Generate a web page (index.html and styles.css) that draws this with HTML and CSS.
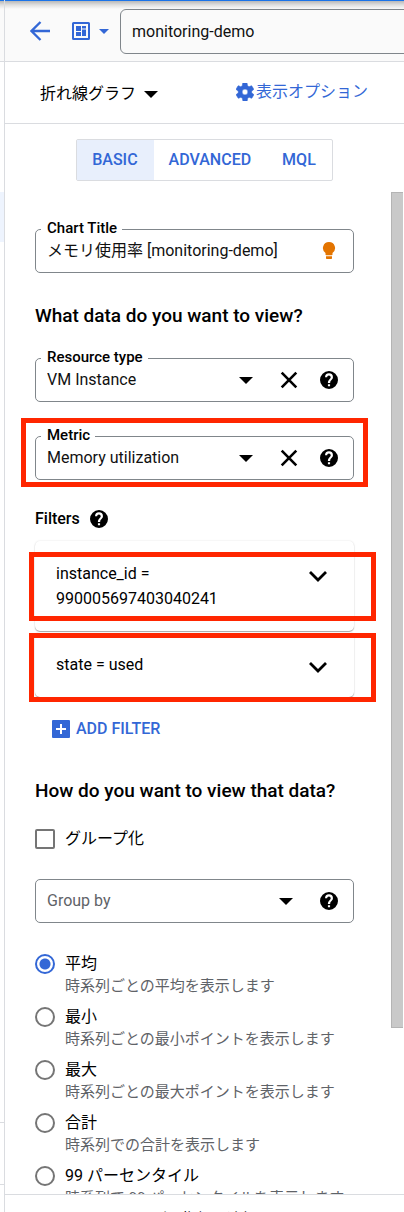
FILE: index.html
```html
<!DOCTYPE html>
<html lang="ja">
<head>
<meta charset="utf-8">
<meta name="viewport" content="width=device-width, initial-scale=1">
<title>monitoring-demo</title>
<link rel="stylesheet" href="styles.css">
</head>
<body>
<svg class="sprite" aria-hidden="true">
  <symbol id="caret" viewBox="0 0 12 6"><path d="M0 0h12L6 6z"/></symbol>
  <symbol id="close" viewBox="0 0 20 20"><path d="M2.700 2.700l14.600 14.600M17.300 2.700L2.700 17.300" fill="none" stroke="currentColor" stroke-width="2.600"/></symbol>
  <symbol id="help" viewBox="2 2 20 20"><path d="M12 2a10 10 0 1 0 0 20 10 10 0 0 0 0-20zm1.200 17h-2.400v-2.400h2.400zm2.300-7.700l-.9.9c-.8.8-1.300 1.500-1.300 3h-2.500v-.6c0-1.200.5-2.200 1.300-3l1.200-1.200c.4-.4.6-.9.6-1.400a2 2 0 0 0-4 0H7.600a4.400 4.400 0 0 1 8.800 0c0 .9-.4 1.700-.9 2.300z"/></symbol>
  <symbol id="chevron" viewBox="0 0 24 24"><path d="M4 8l8 8 8-8" fill="none" stroke="currentColor" stroke-width="2.800"/></symbol>
</svg>
<div class="backdrop" aria-hidden="true">
  <div class="backdrop-head"></div>
  <div class="backdrop-gap"></div>
  <div class="backdrop-selected"></div>
  <div class="backdrop-rest"></div>
  <div class="backdrop-row"></div>
  <div class="backdrop-tail"></div>
</div>
<main class="panel">
  <header class="topbar">
    <button class="icon-button" aria-label="戻る"><svg class="back" viewBox="0 0 20 20"><path d="M20 10H2M10.500 1L1.500 10l9 9" fill="none" stroke="currentColor" stroke-width="2.300"/></svg></button>
    <button class="icon-button board" aria-label="ダッシュボード"><svg class="board-icon" viewBox="0 0 18 18"><path fill-rule="evenodd" d="M1.500 0h15Q18 0 18 1.500v15q0 1.500-1.500 1.500h-15Q0 18 0 16.500v-15Q0 0 1.500 0zM2 2v14h14V2zM4 4h5v5H4zm6 0h4v2.500h-4zM4 10h5v4H4zM10 7.500h4V14h-4z"/></svg><svg class="caret-small"><use href="#caret"/></svg></button>
    <input class="name-input" aria-label="名前" value="monitoring-demo">
  </header>
  <div class="toolbar">
    <button class="chart-type">折れ線グラフ<svg class="caret"><use href="#caret"/></svg></button>
    <a class="options" href="#"><svg class="gear" viewBox="2 2 20 20"><path d="M19.400 13c.1-.7.1-1.300 0-2l2.100-1.600c.2-.2.300-.4.100-.7l-2-3.400c-.1-.2-.4-.3-.6-.2l-2.500 1c-.5-.4-1.100-.7-1.700-1l-.4-2.600c0-.3-.2-.5-.5-.5h-4c-.3 0-.5.2-.5.4L9 5.100c-.6.2-1.100.6-1.700 1l-2.500-1c-.2-.1-.5 0-.6.2l-2 3.400c-.1.200-.1.500.1.700L4.500 11c-.1.700-.1 1.300 0 2l-2.100 1.600c-.2.200-.3.500-.1.700l2 3.400c.1.200.4.300.6.200l2.500-1c.5.400 1.100.7 1.700 1l.4 2.600c0 .3.2.5.5.5h4c.3 0 .5-.2.5-.4l.4-2.700c.6-.2 1.100-.6 1.700-1l2.500 1c.2.100.5 0 .6-.2l2-3.400c.1-.2.100-.5-.1-.7zM12 15.200a3.200 3.200 0 1 1 0-6.400 3.200 3.200 0 0 1 0 6.400z" stroke="currentColor" stroke-width=".6"/></svg>表示オプション</a>
  </div>
  <nav class="tabs">
    <div class="tab-group">
      <button class="tab selected">BASIC</button>
      <button class="tab">ADVANCED</button>
      <button class="tab">MQL</button>
    </div>
  </nav>
  <div class="scroller">
    <form class="form">
      <div class="field">
        <label class="field-label" for="title">Chart Title</label>
        <input class="control" id="title" value="メモリ使用率 [monitoring-demo]">
        <svg class="bulb" viewBox="0 0 20 20"><path d="M10 1a6 6 0 0 0-3.500 10.900V13.500q0 .8.800.8h5.400q.8 0 .8-.8v-1.600A6 6 0 0 0 10 1zM7 15.300h6v1.600q0 1.200-1.200 1.200H8.200Q7 18.100 7 16.900z"/></svg>
      </div>

      <h2 class="heading">What data do you want to view?</h2>
      <div class="field">
        <label class="field-label" for="resource">Resource type</label>
        <select class="control" id="resource"><option>VM Instance</option></select>
        <svg class="caret-slot"><use href="#caret"/></svg>
        <button type="button" class="slot" aria-label="クリア"><svg class="icon"><use href="#close"/></svg></button>
        <button type="button" class="slot" aria-label="ヘルプ"><svg class="icon-help"><use href="#help"/></svg></button>
      </div>
      <div class="field metric">
        <label class="field-label" for="metric">Metric</label>
        <select class="control" id="metric"><option>Memory utilization</option></select>
        <svg class="caret-slot"><use href="#caret"/></svg>
        <button type="button" class="slot" aria-label="クリア"><svg class="icon"><use href="#close"/></svg></button>
        <button type="button" class="slot" aria-label="ヘルプ"><svg class="icon-help"><use href="#help"/></svg></button>
        <span class="mark mark-metric"></span>
      </div>

      <div class="filters-title">Filters <button type="button" class="slot" aria-label="ヘルプ"><svg class="icon-help"><use href="#help"/></svg></button></div>
      <div class="filters">
        <div class="card">
          <div class="card-text">instance_id =<br>990005697403040241</div>
          <button type="button" class="expand" aria-label="展開"><svg class="chevron"><use href="#chevron"/></svg></button>
          <span class="mark mark-instance"></span>
        </div>
        <div class="card">
          <div class="card-text">state = used</div>
          <button type="button" class="expand" aria-label="展開"><svg class="chevron"><use href="#chevron"/></svg></button>
          <span class="mark mark-state"></span>
        </div>
      </div>
      <button type="button" class="add"><svg class="plus" viewBox="0 0 18 18"><path fill-rule="evenodd" d="M1 0h16q1 0 1 1v16q0 1-1 1H1q-1 0-1-1V1Q0 0 1 0zM8 4v4H4v2h4v4h2v-4h4V8h-4V4z"/></svg>ADD FILTER</button>

      <h2 class="heading how">How do you want to view that data?</h2>
      <label class="check"><input type="checkbox" class="box">グループ化</label>
      <div class="field">
        <select class="control muted" aria-label="Group by"><option>Group by</option></select>
        <svg class="caret-slot"><use href="#caret"/></svg>
        <button type="button" class="slot" aria-label="ヘルプ"><svg class="icon-help"><use href="#help"/></svg></button>
      </div>

      <div class="radios">
        <label class="radio"><input type="radio" name="agg" class="dot" checked><span>平均<small class="hint">時系列ごとの平均を表示します</small></span></label>
        <label class="radio"><input type="radio" name="agg" class="dot"><span>最小<small class="hint">時系列ごとの最小ポイントを表示します</small></span></label>
        <label class="radio"><input type="radio" name="agg" class="dot"><span>最大<small class="hint">時系列ごとの最大ポイントを表示します</small></span></label>
        <label class="radio"><input type="radio" name="agg" class="dot"><span>合計<small class="hint">時系列での合計を表示します</small></span></label>
        <label class="radio"><input type="radio" name="agg" class="dot"><span>99 パーセンタイル<small class="hint">時系列で 99 パーセンタイルを表示します</small></span></label>
      </div>
    </form>
    <div class="scrollbar" aria-hidden="true"><div class="thumb"></div></div>
  </div>
  <footer class="footer"><button class="footer-button">別の指標を追加</button></footer>
</main>
</body>
</html>
```
FILE: styles.css
```css
* { box-sizing: border-box; }
body {
  margin: 0;
  height: 100vh;
  overflow: hidden;
  display: flex;
  background: #fff;
  color: #000;
  font: 16px/24px Roboto, "Noto Sans CJK JP", sans-serif;
}
button, input, select { font: inherit; color: inherit; margin: 0; }
button { border: 0; padding: 0; background: none; }
svg { display: block; flex: none; fill: currentColor; }
.sprite { position: absolute; width: 0; height: 0; }

.backdrop { width: 4px; flex: none; display: flex; flex-direction: column; }
.backdrop-head { height: 62px; border-top: 1px solid #1a73e8; border-bottom: 1px solid #dadce0; background: linear-gradient(#b8b8b8, #e0e0e0 4px, #fafafa 8px); }
.backdrop-gap { height: 130px; }
.backdrop-selected { height: 50px; background: #eef4fe; }
.backdrop-rest { flex: 1; }
.backdrop-row { height: 63px; border: solid #dadce0; border-width: 1px 0; }
.backdrop-tail { height: 27px; }

.panel { flex: 1; min-width: 0; display: flex; flex-direction: column; border-left: 1px solid #dadce0; }
.topbar {
  flex: none;
  height: 62px;
  display: flex;
  align-items: center;
  padding-left: 25px;
  border-top: 1px solid #1a73e8;
  border-bottom: 1px solid #dadce0;
  background: linear-gradient(#b8b8b8, #e0e0e0 4px, #fafafa 8px);
  color: #3367d6;
  overflow: hidden;
}
.icon-button { display: flex; align-items: center; gap: 9px; }
.back { width: 20px; height: 20px; }
.board { margin-left: 22px; }
.board-icon { width: 18px; height: 18px; }
.caret-small { width: 10px; height: 5px; }
.name-input {
  flex: 1;
  min-width: 0;
  height: 45px;
  margin: 0 -10px 0 11px;
  padding: 0 11px;
  border: 1px solid #80868b;
  border-radius: 6px;
  background: #fafafa;
  color: #111;
}
.toolbar {
  flex: none;
  height: 62px;
  display: flex;
  align-items: center;
  justify-content: space-between;
  padding: 0 36px 0 35px;
  border-bottom: 1px solid #dadce0;
}
.chart-type { display: flex; align-items: center; gap: 8px; padding-top: 3px; }
.caret { width: 14px; height: 7px; }
.options { display: flex; align-items: center; gap: 2px; padding-bottom: 2px; color: #3367d6; text-decoration: none; }
.gear { width: 18px; height: 18px; }

.tabs { flex: none; display: flex; justify-content: center; padding: 15px 0 11px; }
.tab-group { display: flex; border: 1px solid #dadce0; border-radius: 2px; }
.tab { height: 40px; padding: 0 16px 0 15px; color: #3367d6; font-weight: 500; }
.selected { background: #e8effc; }

.scroller { flex: 1; min-height: 0; display: flex; overflow: hidden; }
.form { flex: 1; min-width: 0; padding: 37px 37px 0 30px; }
.scrollbar { width: 13px; flex: none; }
.thumb { height: 836px; margin-right: 1px; background: #c9c9c9; border: solid #b4b4b4; border-width: 1px 0 1px 1px; }

.field {
  position: relative;
  height: 44px;
  display: flex;
  align-items: center;
  gap: 20px;
  padding: 0 14px 0 11px;
  border: 1px solid #80868b;
  border-radius: 5px;
}
.metric { margin-top: 34px; }
.field-label {
  position: absolute;
  left: 5px;
  top: -12px;
  padding: 0 5px 0 6px;
  background: #fff;
  font-size: 15px;
  line-height: 20px;
  font-weight: 500;
}
.control { flex: 1; min-width: 0; padding: 0; border: 0; background: none; appearance: none; color: #111; }
.muted { color: #5f6368; }
.slot { width: 20px; height: 20px; display: flex; align-items: center; justify-content: center; flex: none; }
.icon, .bulb { width: 20px; height: 20px; }
.bulb { color: #e37400; }
.icon-help { width: 18px; height: 18px; }
.caret-slot { width: 14px; height: 7px; margin: 0 6px 0 3px; }
.heading { margin: 31px 0 30px; font-size: 19px; line-height: 24px; font-weight: 500; white-space: nowrap; }
.filters-title { display: flex; align-items: center; gap: 9px; margin: 27px 0 10px; font-weight: 500; }
.filters { display: grid; gap: 1px; }
.card {
  position: relative;
  display: flex;
  justify-content: space-between;
  padding: 20px 24px 20px 21px;
  border-radius: 5px;
  line-height: 25px;
  box-shadow: 0 1px 1px rgba(0,0,0,.3), 0 0 2px rgba(0,0,0,.12);
}
.expand { height: 25px; padding-top: 3px; }
.chevron { width: 24px; height: 24px; }
.mark { position: absolute; border: 5px solid #ff2600; pointer-events: none; }
.mark-metric { inset: -19px -15px -8px -15px; }
.mark-instance { inset: 11px -22px 10px -6px; }
.mark-state { inset: 1px -22px -5px -6px; }
.add { display: flex; align-items: center; gap: 6px; margin: 20px 0 0 17px; color: #3367d6; font-weight: 500; }
.plus { width: 18px; height: 18px; }
.how { margin: 38px 0 24px; }
.check { display: flex; align-items: center; gap: 10px; margin-bottom: 28px; }
.box { width: 20px; height: 20px; appearance: none; border: 2px solid #757575; border-radius: 2px; background: #fff; }
.radios { display: grid; gap: 9px; margin-top: 30px; line-height: 22px; }
.radio { display: flex; gap: 10px; white-space: nowrap; }
.dot { flex: none; width: 20px; height: 20px; margin-top: 1px; appearance: none; border: 2px solid #757575; border-radius: 50%; background: #fff; }
.dot:checked { border-color: #3367d6; background: radial-gradient(circle, #3367d6 5px, #fff 6px); }
.hint { display: block; font-size: 15px; line-height: 22px; color: #5f6368; }
.footer { flex: none; height: 18px; overflow: hidden; display: flex; align-items: flex-start; justify-content: center; padding-top: 12px; border-top: 1px solid #dadce0; }
.footer-button { font-size: 15px; line-height: 24px; }
```
